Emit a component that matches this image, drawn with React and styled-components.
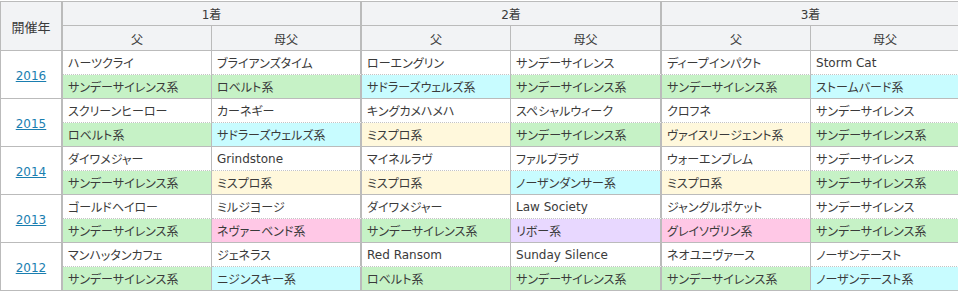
import styled, { createGlobalStyle } from "styled-components";

const GlobalStyle = createGlobalStyle`
  html, body {
    margin: 0;
    padding: 0;
    background: #fff;
    overflow: hidden;
  }
  body {
    padding-top: 1px;
    font-family: "DejaVu Sans", "Noto Sans CJK JP", sans-serif;
    font-feature-settings: "palt";
    color: #333;
  }
`;

const colors = {
  green: "#c6f2c6",
  cyan: "#c8fcff",
  yellow: "#fff8dc",
  pink: "#ffc8e6",
  purple: "#e8d8ff",
};

const Table = styled.table`
  border-collapse: separate;
  border-spacing: 0;
  table-layout: fixed;
  width: 961px;
  font-size: 12px;
`;

const Th = styled.th`
  box-sizing: border-box;
  height: 25px;
  padding: 0;
  background: #f2f3f5;
  font-weight: normal;
  text-align: center;
  color: #3a3a3a;
  border-bottom: 1px solid #bbb;
  border-top: ${(props) => (props.top ? "1px solid #bbb" : "none")};
  border-left: ${(props) => (props.first ? "1px solid #bbb" : "none")};
  border-right: ${(props) => (props.end ? "2px solid #bbb" : "1px solid #bbb")};
  font-size: ${(props) => (props.first ? "13px" : "12px")};
`;

const YearCell = styled.td`
  box-sizing: border-box;
  padding: 3px 0 0;
  text-align: center;
  vertical-align: middle;
  border-left: 1px solid #bbb;
  border-right: 2px solid #bbb;
  border-bottom: 1px solid #bbb;
`;

const YearLink = styled.a`
  color: #1a7eb0;
  text-decoration: underline;
  font-size: 12px;
`;

const Cell = styled.td`
  box-sizing: border-box;
  height: 24px;
  padding: 0 5px;
  white-space: nowrap;
  overflow: hidden;
  vertical-align: middle;
  color: #3a3a3a;
  background: ${(props) => (props.tone ? colors[props.tone] : "#fff")};
  border-right: ${(props) => (props.end ? "2px solid #bbb" : "1px solid #bbb")};
  border-bottom: ${(props) =>
    props.lower ? "1px solid #bbb" : "1px dotted #c4c4c4"};
`;

const years = [
  {
    year: 2016,
    horses: [
      ["ハーツクライ", "サンデーサイレンス系", "green", "ブライアンズタイム", "ロベルト系", "green"],
      ["ローエングリン", "サドラーズウェルズ系", "cyan", "サンデーサイレンス", "サンデーサイレンス系", "green"],
      ["ディープインパクト", "サンデーサイレンス系", "green", "Storm Cat", "ストームバード系", "cyan"],
    ],
  },
  {
    year: 2015,
    horses: [
      ["スクリーンヒーロー", "ロベルト系", "green", "カーネギー", "サドラーズウェルズ系", "cyan"],
      ["キングカメハメハ", "ミスプロ系", "yellow", "スペシャルウィーク", "サンデーサイレンス系", "green"],
      ["クロフネ", "ヴァイスリージェント系", "yellow", "サンデーサイレンス", "サンデーサイレンス系", "green"],
    ],
  },
  {
    year: 2014,
    horses: [
      ["ダイワメジャー", "サンデーサイレンス系", "green", "Grindstone", "ミスプロ系", "yellow"],
      ["マイネルラヴ", "ミスプロ系", "yellow", "ファルブラヴ", "ノーザンダンサー系", "cyan"],
      ["ウォーエンブレム", "ミスプロ系", "yellow", "サンデーサイレンス", "サンデーサイレンス系", "green"],
    ],
  },
  {
    year: 2013,
    horses: [
      ["ゴールドヘイロー", "サンデーサイレンス系", "green", "ミルジヨージ", "ネヴァーベンド系", "pink"],
      ["ダイワメジャー", "サンデーサイレンス系", "green", "Law Society", "リボー系", "purple"],
      ["ジャングルポケット", "グレイソヴリン系", "pink", "サンデーサイレンス", "サンデーサイレンス系", "green"],
    ],
  },
  {
    year: 2012,
    horses: [
      ["マンハッタンカフェ", "サンデーサイレンス系", "green", "ジェネラス", "ニジンスキー系", "cyan"],
      ["Red Ransom", "ロベルト系", "green", "Sunday Silence", "サンデーサイレンス系", "green"],
      ["ネオユニヴァース", "サンデーサイレンス系", "green", "ノーザンテースト", "ノーザンテースト系", "cyan"],
    ],
  },
];

const widths = [63, 149, 150, 149, 151, 149, 150];

const App = () => {
  return (
    <>
      <GlobalStyle />
      <Table>
        <colgroup>
          {widths.map((w, i) => (
            <col key={i} style={{ width: w }} />
          ))}
        </colgroup>
        <thead>
          <tr>
            <Th top first end rowSpan={2}>
              開催年
            </Th>
            <Th top end colSpan={2}>1着</Th>
            <Th top end colSpan={2}>2着</Th>
            <Th top end colSpan={2}>3着</Th>
          </tr>
          <tr>
            <Th>父</Th>
            <Th end>母父</Th>
            <Th>父</Th>
            <Th end>母父</Th>
            <Th>父</Th>
            <Th end>母父</Th>
          </tr>
        </thead>
        <tbody>
          {years.map((y) => [
            <tr key={y.year + "a"}>
              <YearCell rowSpan={2}>
                <YearLink href="#">{y.year}</YearLink>
              </YearCell>
              {y.horses.map((h, i) => [
                <Cell key={i + "s"}>{h[0]}</Cell>,
                <Cell key={i + "d"} end>
                  {h[3]}
                </Cell>,
              ])}
            </tr>,
            <tr key={y.year + "b"}>
              {y.horses.map((h, i) => [
                <Cell key={i + "s"} lower tone={h[2]}>
                  {h[1]}
                </Cell>,
                <Cell key={i + "d"} lower end tone={h[5]}>
                  {h[4]}
                </Cell>,
              ])}
            </tr>,
          ])}
        </tbody>
      </Table>
    </>
  );
};

export default App;
